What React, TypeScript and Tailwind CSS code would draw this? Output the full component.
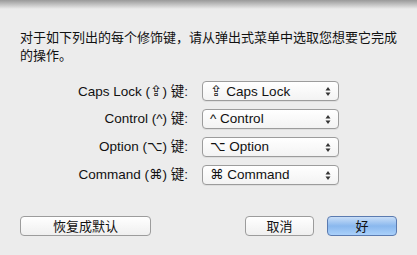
const rows = [
  { label: "Caps Lock (", sym: "⇪", tail: ") 键:", value: "Caps Lock" },
  { label: "Control (", sym: "^", tail: ") 键:", value: "Control" },
  { label: "Option (", sym: "⌥", tail: ") 键:", value: "Option" },
  { label: "Command (", sym: "⌘", tail: ") 键:", value: "Command" },
];

const font = {
  fontFamily: '"Liberation Sans", "DejaVu Sans", "Noto Sans CJK SC", sans-serif',
};

function Arrows() {
  return (
    <svg width="6" height="11" viewBox="0 0 6 11" className="shrink-0">
      <path d="M3 1 L5.5 4.5 H0.5 Z" fill="#333" />
      <path d="M3 10 L5.5 6.5 H0.5 Z" fill="#333" />
    </svg>
  );
}

function Sym({ s }: { s: string }) {
  // caps lock glyph renders tiny in the fallback font, bump it a bit
  return s === "⇪" ? <span className="text-[15px]">{s}</span> : <>{s}</>;
}

export default function App() {
  return (
    <div
      className="relative w-[417px] h-[255px] overflow-hidden bg-[#ececec] text-[#111]"
      style={font}
    >
      <div className="absolute inset-x-0 top-0 h-[9px] bg-gradient-to-b from-[#9a9a9a] to-[#ececec]" />

      <div className="pt-[29px] pl-[20px] pr-[16px] text-[13px] leading-[18px]">
        对于如下列出的每个修饰键，请从弹出式菜单中选取您想要它完成的操作。
      </div>

      <div className="mt-[16px] flex flex-col gap-[8px]">
        {rows.map((r) => (
          <div key={r.value} className="flex items-center h-[20px]">
            <div className="w-[188px] text-right text-[13.5px] leading-none">
              {r.label}
              <Sym s={r.sym} />
              {r.tail}
            </div>
            <div className="ml-[14px] w-[137px] h-[20px] flex items-center justify-between pl-[7px] pr-[7px] rounded-[4px] border border-[#9c9c9c] bg-gradient-to-b from-white to-[#f3f3f3] shadow-[0_1px_0_rgba(0,0,0,0.06)] text-[13.5px] leading-none">
              <span>
                <Sym s={r.sym} /> {r.value}
              </span>
              <Arrows />
            </div>
          </div>
        ))}
      </div>

      <div className="mt-[31px] flex items-center px-[20px]">
        <button className="w-[131px] h-[20px] rounded-[4px] border border-[#9c9c9c] bg-gradient-to-b from-white to-[#efefef] text-[13px] leading-none">
          恢复成默认
        </button>
        <div className="flex-1" />
        <button className="w-[69px] h-[20px] rounded-[4px] border border-[#9c9c9c] bg-gradient-to-b from-white to-[#efefef] text-[13px] leading-none">
          取消
        </button>
        <button className="ml-[13px] w-[70px] h-[20px] rounded-[4px] border border-[#5b7bb0] bg-gradient-to-b from-[#c9def7] via-[#8ab8ee] to-[#a9d0fa] text-[13px] leading-none">
          好
        </button>
      </div>
    </div>
  );
}
